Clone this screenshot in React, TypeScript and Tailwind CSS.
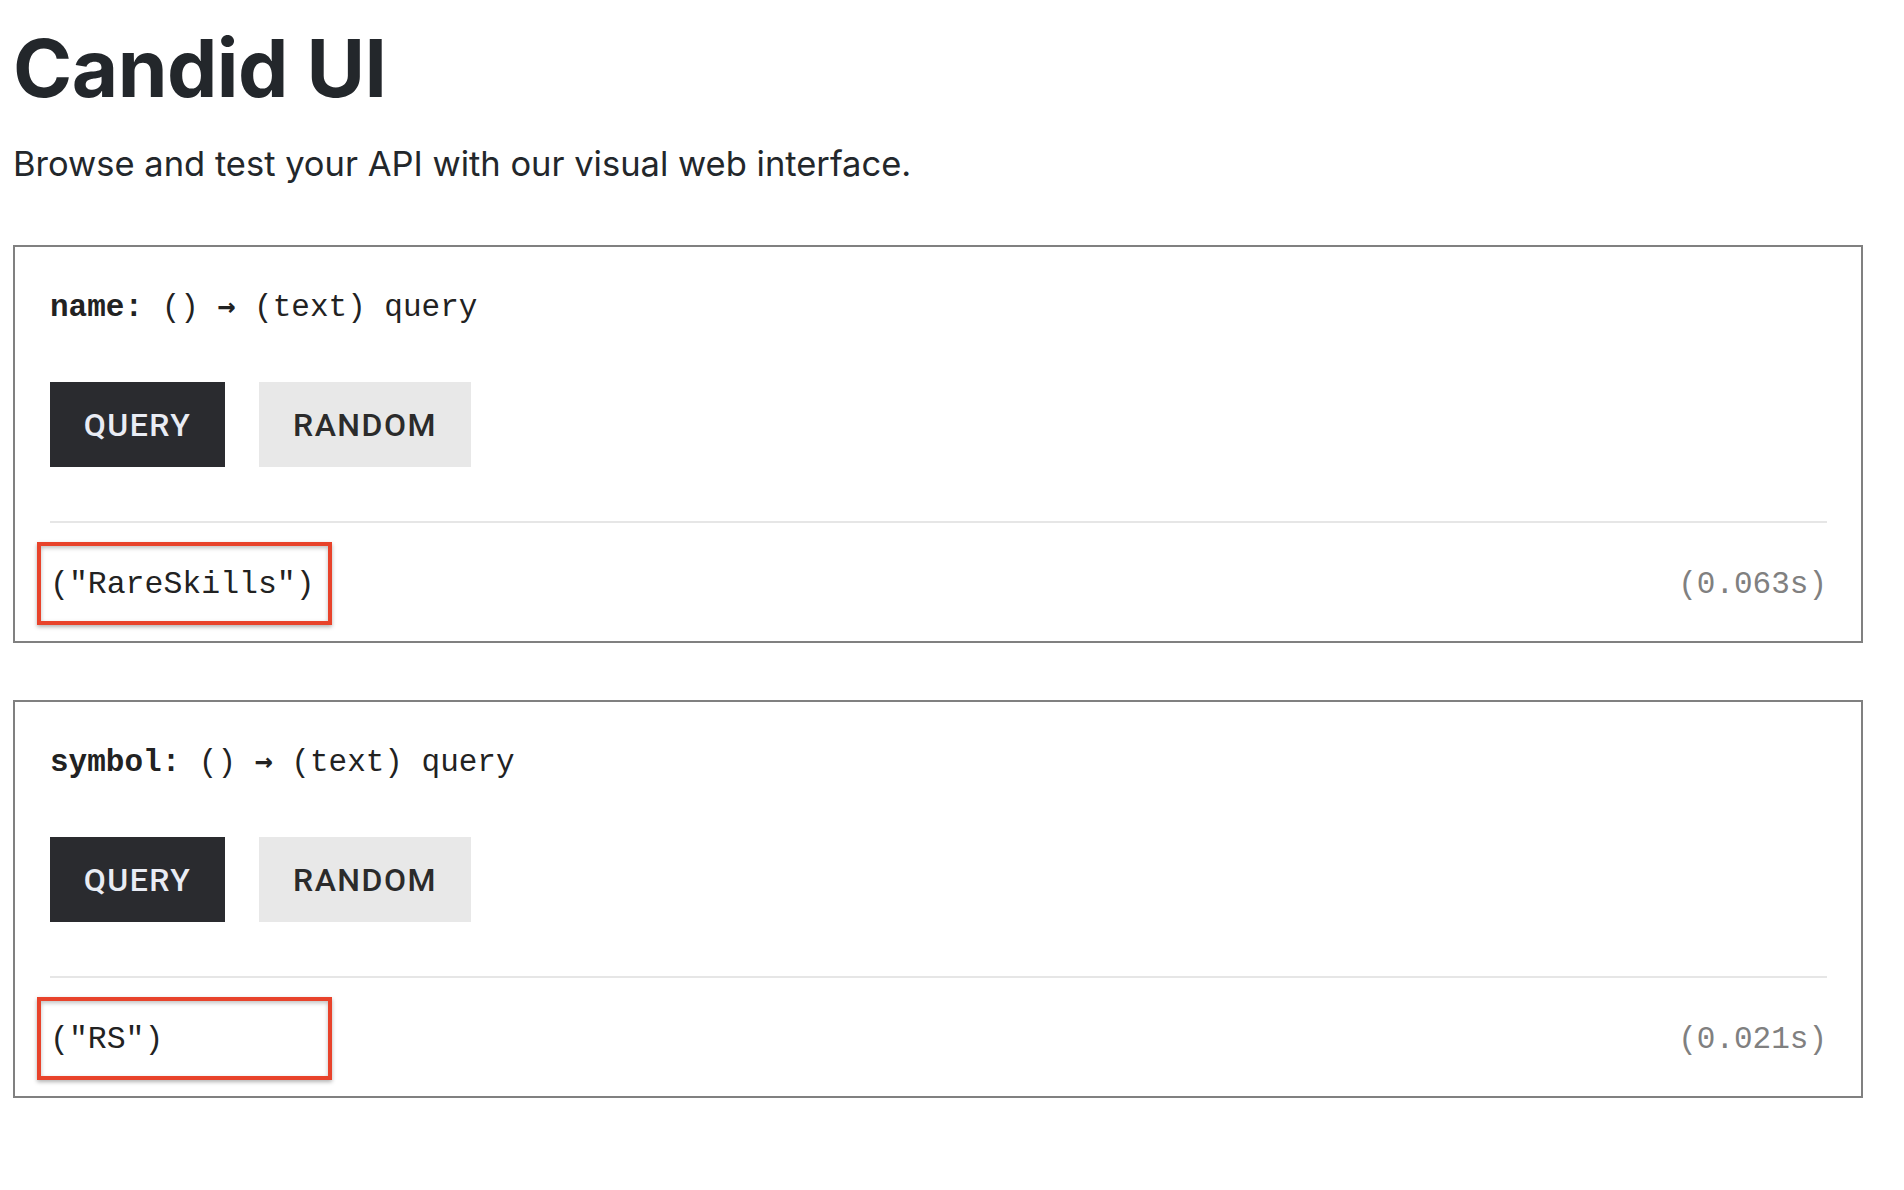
import React from "react";

const mono = "font-['Liberation_Mono','Courier_New',monospace]";

function MethodCard({ name, result, time }: { name: string; result: string; time: string }) {
  return (
    <div className="border-2 border-[#808080] bg-white pl-[35px] pr-[34px] pt-[43px] pb-[38px]">
      <div className={`${mono} h-[36px] overflow-visible text-[31px] leading-[36px] text-[#222] whitespace-pre`}>
        <span className="font-bold">{name}:</span> (){" "}
        <span className="font-['DejaVu_Sans_Mono',monospace] font-bold text-[30px] leading-none">→</span> (text) query
      </div>
      <div className="mt-[56px] flex gap-[34px] font-['Roboto',sans-serif] text-[32px] font-medium tracking-[1.5px]">
        <button className="flex h-[85px] w-[175px] items-center justify-center bg-[#2a2b2f] text-[#e9ecf4]">
          QUERY
        </button>
        <button className="flex h-[85px] w-[212px] items-center justify-center bg-[#e8e8e8] text-[#2b2b2b]">
          RANDOM
        </button>
      </div>
      <div className="mt-[54px] h-[2px] bg-[#e6e6e6]" />
      <div className={`${mono} relative mt-[44px] flex h-[36px] items-baseline justify-between leading-[36px]`}>
        <span className="text-[31.5px] text-[#222] whitespace-pre">{result}</span>
        <span className="text-[31px] text-[#808080]">{time}</span>
        <div className="pointer-events-none absolute left-[-13px] top-[-25px] h-[83px] w-[295px] border-4 border-[#e8432b] shadow-[0_2px_4px_rgba(0,0,0,0.3),inset_0_2px_4px_rgba(0,0,0,0.25)]" />
      </div>
    </div>
  );
}

export default function App() {
  return (
    <div className="min-h-[1190px] bg-white pl-[13px] pr-[41px] pt-[28px] font-['Inter',sans-serif] text-[#23272b]">
      <h1 className="text-[80px] font-bold leading-[80px] tracking-[-0.5px]">Candid UI</h1>
      <p className="mt-[39px] text-[34.5px] leading-[34px]">
        Browse and test your API with our visual web interface.
      </p>
      <div className="mt-[64px] flex flex-col gap-[57px]">
        <MethodCard name="name" result={'("RareSkills")'} time="(0.063s)" />
        <MethodCard name="symbol" result={'("RS")'} time="(0.021s)" />
      </div>
    </div>
  );
}
